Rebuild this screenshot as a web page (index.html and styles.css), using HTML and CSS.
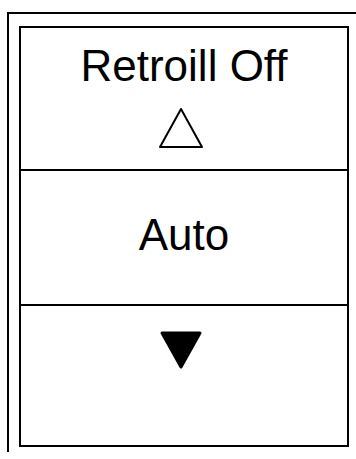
FILE: index.html
```html
<!DOCTYPE html>
<html lang="en">
<head>
<meta charset="UTF-8">
<meta name="viewport" content="width=device-width, initial-scale=1.0">
<title>Retroill</title>
<link rel="stylesheet" href="styles.css">
</head>
<body>
<div class="frame">
    <div class="panel">
        <div class="section top">
            <div class="label">Retroill Off</div>
            <svg class="arrow up" width="46" height="42" viewBox="0 0 46 42">
                <polygon points="23,2 44,40 2,40" fill="none" stroke="#000" stroke-width="2" stroke-linejoin="round"/>
            </svg>
        </div>
        <div class="section middle">
            <div class="label">Auto</div>
        </div>
        <div class="section bottom">
            <svg class="arrow down" width="44" height="40" viewBox="0 0 44 40">
                <polygon points="3,3 41,3 22,37" fill="#000" stroke="#000" stroke-width="3" stroke-linejoin="round"/>
            </svg>
        </div>
    </div>
</div>
</body>
</html>
```

FILE: styles.css
```css
html, body {
    margin: 0;
    padding: 0;
    background-color: #fff;
    overflow: hidden;
}

body {
    font-family: "Liberation Sans", Arial, sans-serif;
    color: #000;
}

.frame {
    margin: 12px 0 0 7px;
    padding: 12px 0 12px 10px;
    border-top: 2px solid #000;
    border-left: 2px solid #000;
    height: 440px;
    box-sizing: border-box;
}

.panel {
    width: 330px;
    height: 421px;
    border: 2px solid #000;
    box-sizing: border-box;
    display: flex;
    flex-direction: column;
}

.section {
    display: flex;
    flex-direction: column;
    align-items: center;
    box-sizing: border-box;
}

.top {
    height: 143px;
    padding-top: 16px;
    border-bottom: 2px solid #000;
}

.middle {
    height: 135px;
    padding-top: 42px;
    border-bottom: 2px solid #000;
}

.bottom {
    flex: 1;
    padding-top: 24px;
}

.label {
    font-size: 44px;
    line-height: 44px;
}

.arrow {
    display: block;
    margin-right: 7px;
}

.up {
    margin-top: 19px;
}
```
